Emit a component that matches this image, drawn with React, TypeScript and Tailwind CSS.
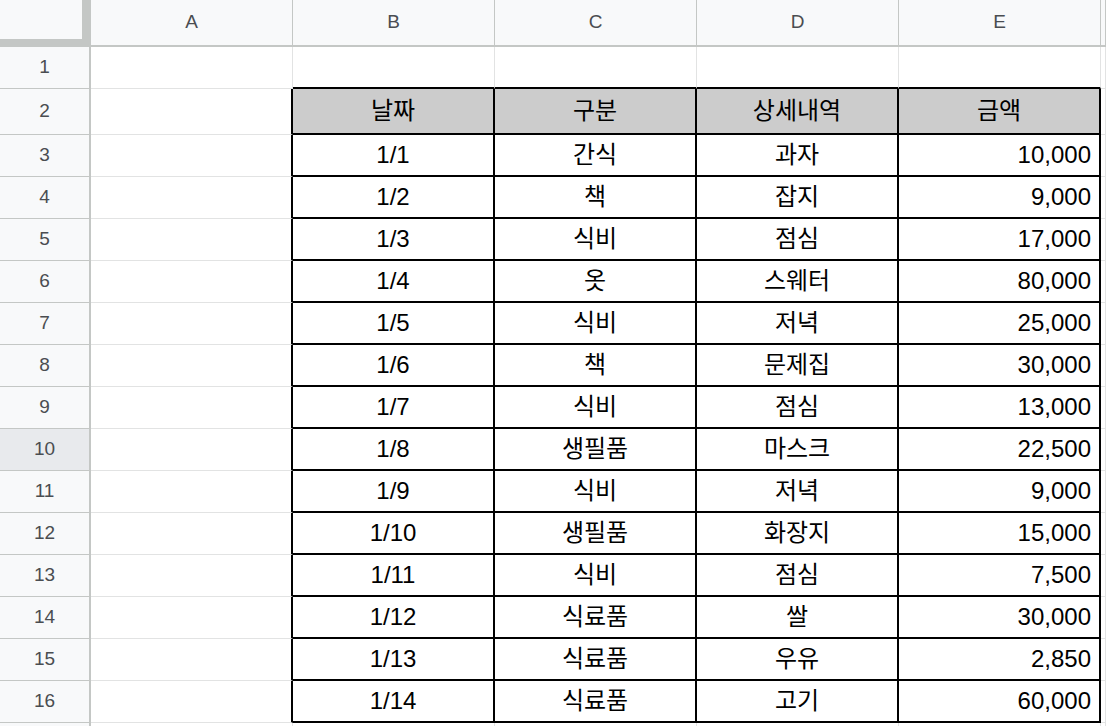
import React from "react";

const cols = ["A", "B", "C", "D", "E", ""];

const data: string[][] = [
  ["1/1", "간식", "과자", "10,000"],
  ["1/2", "책", "잡지", "9,000"],
  ["1/3", "식비", "점심", "17,000"],
  ["1/4", "옷", "스웨터", "80,000"],
  ["1/5", "식비", "저녁", "25,000"],
  ["1/6", "책", "문제집", "30,000"],
  ["1/7", "식비", "점심", "13,000"],
  ["1/8", "생필품", "마스크", "22,500"],
  ["1/9", "식비", "저녁", "9,000"],
  ["1/10", "생필품", "화장지", "15,000"],
  ["1/11", "식비", "점심", "7,500"],
  ["1/12", "식료품", "쌀", "30,000"],
  ["1/13", "식료품", "우유", "2,850"],
  ["1/14", "식료품", "고기", "60,000"],
];

const heights: Record<number, string> = { 1: "h-[42px]", 2: "h-[46px]" };

function Cell({ row, col }: { row: number; col: number }) {
  // col: 0=A .. 5=F ; row 1..17
  const inTable = row >= 2 && row <= 16 && col >= 1 && col <= 4;
  const blackRight = row >= 2 && row <= 16 && col >= 0 && col <= 4;
  const blackBottom = row >= 1 && row <= 16 && col >= 1 && col <= 4;

  let text = "";
  let align = "justify-center";
  if (row === 2 && inTable) text = ["날짜", "구분", "상세내역", "금액"][col - 1];
  if (row >= 3 && row <= 16 && inTable) {
    text = data[row - 3][col - 1];
    if (col === 4) align = "justify-end pr-[8px]";
  }

  const cls = [
    "flex items-center text-[24px] text-black",
    align,
    row === 2 && inTable ? "bg-[#cccccc]" : "bg-white",
    blackRight ? "border-r-2 border-r-black" : "border-r border-r-[#e2e3e3]",
    blackBottom ? "border-b-2 border-b-black" : "border-b border-b-[#e2e3e3]",
  ].join(" ");

  return <div className={cls}>{text}</div>;
}

export default function App() {
  const rows = Array.from({ length: 17 }, (_, i) => i + 1);
  return (
    <div
      className="w-[1106px] h-[726px] overflow-hidden bg-white"
      style={{ fontFamily: '"Liberation Sans", Arial, "Noto Sans CJK KR", sans-serif' }}
    >
      <div className="grid grid-cols-[91px_202px_202px_202px_202px_202px_1fr] grid-rows-[47px]">
        <div className="bg-[#f8f9fa] border-r-[9px] border-b-[8px] border-[#c4c7c5]" />
        {cols.map((c, i) => (
          <div
            key={i}
            className="flex items-center justify-center bg-[#f8f9fa] text-[19px] text-[#4a4d51] border-r border-r-[#c4c7c5] border-b-2 border-b-[#c4c7c5]"
          >
            {c}
          </div>
        ))}
      </div>
      {rows.map((r) => (
        <div
          key={r}
          className={`grid grid-cols-[91px_202px_202px_202px_202px_202px_1fr] ${heights[r] ?? "h-[42px]"}`}
        >
          <div
            className={`flex items-center justify-center text-[19px] text-[#4a4d51] border-r-2 border-r-[#c4c7c5] border-b border-b-[#c4c7c5] ${
              r === 10 ? "bg-[#e8eaed]" : "bg-[#f8f9fa]"
            }`}
          >
            {r <= 16 ? r : ""}
          </div>
          {cols.map((c, i) => (
            <Cell key={i} row={r} col={i} />
          ))}
        </div>
      ))}
    </div>
  );
}
